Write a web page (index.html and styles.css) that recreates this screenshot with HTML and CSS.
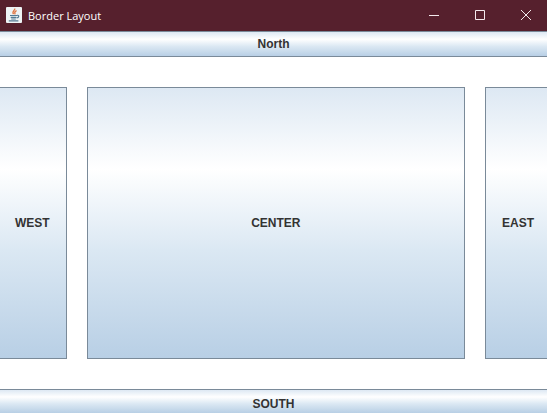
FILE: index.html
```
<!DOCTYPE html>
<html lang="en">
<head>
    <meta charset="UTF-8">
    <meta name="viewport" content="width=device-width, initial-scale=1.0">
    <title>Border Layout</title>
    <link rel="stylesheet" href="styles.css">
</head>
<body>
    <!-- Title bar -->
    <header class="title-bar">
        <svg class="app-icon" width="16" height="16" viewBox="0 0 16 16" aria-hidden="true">
            <rect width="16" height="16" rx="1" fill="#eef3f5"/>
            <path d="M8.7 1.5c1 1.6-3.4 2.8-1.2 5.6M10.6 3.7c-3 1.3-1.7 2.2-1.5 3.6" fill="none" stroke="#df7440" stroke-width="1.3"/>
            <path d="M4 8.5h7M4.7 10.3h5.6M5.2 12h4.6M11 8.3c2.5-.4 2.2 2.2-.4 2.7M2.8 13.8h9.6" fill="none" stroke="#547b94" stroke-width="1.2"/>
        </svg>
        <h1 class="title">Border Layout</h1>
        <div class="window-controls">
            <button class="control" type="button" aria-label="Minimize">
                <svg width="12" height="12" viewBox="0 0 12 12"><path d="M1 6.5h10"/></svg>
            </button>
            <button class="control" type="button" aria-label="Maximize">
                <svg width="12" height="12" viewBox="0 0 12 12"><path d="M1.5 1.5h9v9h-9z"/></svg>
            </button>
            <button class="control" type="button" aria-label="Close">
                <svg width="12" height="12" viewBox="0 0 12 12"><path d="M1 1l10 10M11 1L1 11"/></svg>
            </button>
        </div>
    </header>

    <!-- Border layout regions -->
    <main class="border-layout">
        <button class="region north" type="button">North</button>
        <div class="middle">
            <button class="region west" type="button">WEST</button>
            <button class="region center" type="button">CENTER</button>
            <button class="region east" type="button">EAST</button>
        </div>
        <button class="region south" type="button">SOUTH</button>
    </main>
</body>
</html>
```
FILE: styles.css
```
* {
    box-sizing: border-box;
}
body {
    display: flex;
    flex-direction: column;
    height: 100vh;
    margin: 0;
    overflow: hidden;
    background: #fff;
    font-family: "Liberation Sans", Arial, sans-serif;
}

/* Title bar */
.title-bar {
    display: flex;
    align-items: center;
    height: 31px;
    padding: 0 0 2px 6px;
    background: #56202d;
    color: #fff;
}
.title {
    flex: 1;
    margin: 0 0 0 6px;
    padding-top: 2px;
    font-family: "Open Sans", "Segoe UI", sans-serif;
    font-size: 11px;
    font-weight: normal;
    line-height: 16px;
}
.window-controls {
    display: flex;
    height: 100%;
}
.control {
    display: flex;
    align-items: center;
    justify-content: center;
    width: 46px;
    padding: 0 0 0 4px;
    border: none;
    background: transparent;
}
.control path {
    fill: none;
    stroke: #f4e9ec;
    stroke-width: 1;
}

/* Regions */
.border-layout {
    display: flex;
    flex: 1;
    flex-direction: column;
    gap: 30px;
    min-height: 0;
}
.middle {
    display: flex;
    flex: 1;
    gap: 20px;
}
.region {
    padding: 0;
    border: 1px solid #7a8a99;
    background: linear-gradient(#dde8f3 0%, #fff 30%, #dbe8f3 60%, #b8cfe5 100%);
    color: #333;
    font-family: inherit;
    font-size: 12px;
    font-weight: bold;
    line-height: 16px;
}
.north {
    height: 26px;
    border-width: 1px 0;
}
.west {
    padding: 0 16px 0 15px;
    border-left: none;
}
.center {
    flex: 1;
}
.east {
    padding: 0 13px 0 16px;
    border-right: none;
}
.south {
    height: 24px;
    padding-top: 4px;
    border-width: 1px 0 0;
}
```
